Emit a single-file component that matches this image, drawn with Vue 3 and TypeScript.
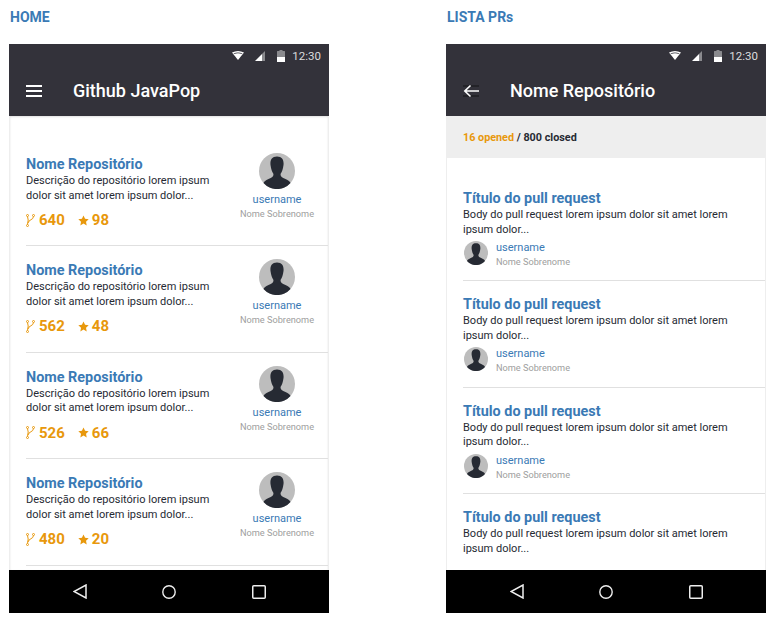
<script setup lang="ts">
interface Repo {
  forks: number
  stars: number
}

interface Pull {
  id: number
  showOwner: boolean
}

const repos: Repo[] = [
  { forks: 640, stars: 98 },
  { forks: 562, stars: 48 },
  { forks: 526, stars: 66 },
  { forks: 480, stars: 20 },
]

// the last row is cut by the nav bar before its owner starts
const pulls: Pull[] = [
  { id: 1, showOwner: true },
  { id: 2, showOwner: true },
  { id: 3, showOwner: true },
  { id: 4, showOwner: false },
]
</script>

<template>
  <div class="page">
    <section class="column">
      <h2 class="label">HOME</h2>
      <div class="phone">
        <header class="topbar">
          <div class="status">
            <svg class="st-wifi" width="12" height="9" viewBox="0 0 12 9"><path d="M0 1.500Q6-1.500 12 1.500L6 9Z" fill="#fff" /><path d="M1.500 2.500Q6 .5 10.500 2.500L10 3Q6 1.500 2 3Z" fill="#33323a" /></svg>
            <svg class="st-signal" width="11" height="11" viewBox="0 0 11 11"><path d="M0 11L7 4V11Z" fill="#fff" /><path d="M7 4L10 1V11H7Z" fill="#8a8a8e" /></svg>
            <svg class="st-battery" width="8" height="12" viewBox="0 0 8 12"><path d="M2.500 0H5.500V1H7.500A.5.5 0 0 1 8 1.500V11.500A.5.5 0 0 1 7.500 12H.5A.5.5 0 0 1 0 11.500V1.500A.5.5 0 0 1 .5 1H2.500Z" fill="#8a8a8e" /><rect y="7" width="8" height="5" fill="#fff" /></svg>
            <span class="clock">12:30</span>
          </div>
          <div class="appbar">
            <svg class="bar-icon" width="16" height="14" viewBox="0 0 16 14"><path d="M0 2H16M0 7H16M0 12H16" stroke="#fff" stroke-width="2" /></svg>
            <span class="bar-title">Github JavaPop</span>
          </div>
        </header>
        <div class="content list-home">
          <article v-for="repo in repos" :key="repo.forks" class="repo">
            <div class="repo-main">
              <h3 class="title">Nome Repositório</h3>
              <p class="text">Descrição do repositório lorem ipsum<br />dolor sit amet lorem ipsum dolor...</p>
              <div class="stats">
                <span class="stat fork">
                  <svg width="9" height="13" viewBox="0 0 9 13" fill="none" stroke="#e8980c" stroke-width="1"><circle cx="1.500" cy="1.500" r="1" /><circle cx="7.500" cy="1.500" r="1" /><circle cx="1.500" cy="11.500" r="1" /><path d="M1.500 2.500L2.200 6L1.500 10.500M7.500 2.500C7.500 6 2.500 5.500 2 9" /></svg>
                  {{ repo.forks }}
                </span>
                <span class="stat">
                  <svg width="11" height="11" viewBox="0 0 24 24" fill="#e8980c"><path d="M12 1l3.400 7.300 7.900 1-5.800 5.500 1.500 7.900L12 18.800l-6.900 3.900 1.500-7.900L.7 9.300l7.900-1z" /></svg>
                  {{ repo.stars }}
                </span>
              </div>
            </div>
            <div class="repo-owner">
              <svg class="avatar big" viewBox="0 0 36 36"><circle cx="18" cy="18" r="18" fill="#bdbdbd" /><path d="M18 3.500C12.500 3.500 11 7.500 11.500 12C12 16 13 19 14.500 21C14.500 23.500 13 24.500 9.500 26C6.500 27.300 5 28.500 4.500 30A18 18 0 0 0 31.500 30C31 28.500 29.500 27.300 26.500 26C23 24.500 21.500 23.500 21.500 21C23 19 24 16 24.500 12C25 7.500 23.500 3.500 18 3.500Z" fill="#262a33" /></svg>
              <span class="username">username</span>
              <span class="fullname">Nome Sobrenome</span>
            </div>
          </article>
        </div>
        <nav class="navbar">
          <svg width="14" height="15" viewBox="0 0 14 15"><path d="M13 1V14L1 7.500Z" fill="none" stroke="#eee" stroke-width="1.500" /></svg>
          <svg class="nav-home" width="14" height="14" viewBox="0 0 14 14"><circle cx="7" cy="7" r="6.200" fill="none" stroke="#eee" stroke-width="1.400" /></svg>
          <svg width="14" height="14" viewBox="0 0 14 14"><rect x=".75" y=".75" width="12.500" height="12.500" rx="1" fill="none" stroke="#eee" stroke-width="1.500" /></svg>
        </nav>
      </div>
    </section>

    <section class="column">
      <h2 class="label">LISTA PRs</h2>
      <div class="phone">
        <header class="topbar">
          <div class="status">
            <svg class="st-wifi" width="12" height="9" viewBox="0 0 12 9"><path d="M0 1.500Q6-1.500 12 1.500L6 9Z" fill="#fff" /><path d="M1.500 2.500Q6 .5 10.500 2.500L10 3Q6 1.500 2 3Z" fill="#33323a" /></svg>
            <svg class="st-signal" width="11" height="11" viewBox="0 0 11 11"><path d="M0 11L7 4V11Z" fill="#fff" /><path d="M7 4L10 1V11H7Z" fill="#8a8a8e" /></svg>
            <svg class="st-battery" width="8" height="12" viewBox="0 0 8 12"><path d="M2.500 0H5.500V1H7.500A.5.5 0 0 1 8 1.500V11.500A.5.5 0 0 1 7.500 12H.5A.5.5 0 0 1 0 11.500V1.500A.5.5 0 0 1 .5 1H2.500Z" fill="#8a8a8e" /><rect y="7" width="8" height="5" fill="#fff" /></svg>
            <span class="clock">12:30</span>
          </div>
          <div class="appbar">
            <svg class="bar-icon" width="16" height="14" viewBox="0 0 16 14"><path d="M0 2H16M0 12H16" stroke="#232328" stroke-width="2" /><path d="M16 7H2M7.500 1.500L1.800 7L7.500 12.500" fill="none" stroke="#fff" stroke-width="1.600" /></svg>
            <span class="bar-title">Nome Repositório</span>
          </div>
        </header>
        <div class="counter">
          <span class="opened">16 opened</span>&nbsp;/ 800 closed
        </div>
        <div class="content list-prs">
          <article v-for="pr in pulls" :key="pr.id" class="pull">
            <h3 class="title">Título do pull request</h3>
            <p class="text">Body do pull request lorem ipsum dolor sit amet lorem<br />ipsum dolor...</p>
            <div v-if="pr.showOwner" class="pull-owner">
              <svg class="avatar small" viewBox="0 0 36 36"><circle cx="18" cy="18" r="18" fill="#bdbdbd" /><path d="M18 3.500C12.500 3.500 11 7.500 11.500 12C12 16 13 19 14.500 21C14.500 23.500 13 24.500 9.500 26C6.500 27.300 5 28.500 4.500 30A18 18 0 0 0 31.500 30C31 28.500 29.500 27.300 26.500 26C23 24.500 21.500 23.500 21.500 21C23 19 24 16 24.500 12C25 7.500 23.500 3.500 18 3.500Z" fill="#262a33" /></svg>
              <div class="pull-names">
                <span class="username">username</span>
                <span class="fullname">Nome Sobrenome</span>
              </div>
            </div>
          </article>
        </div>
        <nav class="navbar">
          <svg width="14" height="15" viewBox="0 0 14 15"><path d="M13 1V14L1 7.500Z" fill="none" stroke="#eee" stroke-width="1.500" /></svg>
          <svg class="nav-home" width="14" height="14" viewBox="0 0 14 14"><circle cx="7" cy="7" r="6.200" fill="none" stroke="#eee" stroke-width="1.400" /></svg>
          <svg width="14" height="14" viewBox="0 0 14 14"><rect x=".75" y=".75" width="12.500" height="12.500" rx="1" fill="none" stroke="#eee" stroke-width="1.500" /></svg>
        </nav>
      </div>
    </section>
  </div>
</template>

<style scoped>
.page {
  display: flex;
  gap: 117px;
  width: 776px;
  height: 620px;
  padding: 0 10px 0 9px;
  box-sizing: border-box;
  background: #fff;
  font-family: Roboto, "Liberation Sans", sans-serif;
  overflow: hidden;
}

.column {
  width: 320px;
}

.label {
  height: 44px;
  margin: 0;
  padding: 9px 0 0 1px;
  box-sizing: border-box;
  font-size: 14px;
  line-height: 16px;
  font-weight: 700;
  color: #3a7ab5;
}

.phone {
  display: flex;
  flex-direction: column;
  height: 569px;
  overflow: hidden;
}

.topbar {
  flex: none;
  height: 72px;
  background: #33323a;
  color: #fff;
}

.status {
  display: flex;
  align-items: center;
  justify-content: flex-end;
  height: 23px;
  padding-right: 8px;
}

.st-wifi {
  margin-right: 11px;
}

.st-signal {
  margin-right: 11px;
}

.st-battery {
  margin-right: 7px;
}

.clock {
  font-size: 11.500px;
  color: #dcdcde;
}

.appbar {
  display: flex;
  align-items: center;
  height: 47px;
}

.bar-icon {
  width: 16px;
  margin-left: 17px;
}

.bar-title {
  margin-left: 31px;
  font-size: 18px;
  font-weight: 500;
}

.content {
  flex: 1;
  min-height: 0;
  overflow: hidden;
  border-left: 1px solid #eee;
  border-right: 1px solid #eee;
  box-sizing: border-box;
}

.list-home {
  padding: 24px 0 0 16px;
  box-shadow: inset 0 1px 2px rgba(0, 0, 0, 0.12);
}

.list-prs {
  padding: 17px 0 0 16px;
  background: #fff;
}

.counter {
  flex: none;
  height: 42px;
  padding-left: 17px;
  display: flex;
  align-items: center;
  background: #eee;
  font-size: 10.800px;
  font-weight: 700;
  color: #262a33;
}

.opened {
  color: #e8980c;
}

.repo {
  display: flex;
  height: 106.400px;
  padding-top: 17px;
  box-sizing: border-box;
  border-bottom: 1px solid #e0e0e0;
}

.repo-main {
  width: 206px;
}

.title {
  margin: 0;
  font-size: 14.400px;
  line-height: 16px;
  font-weight: 700;
  color: #3a7ab5;
}

.text {
  margin: 1px 0 0;
  font-size: 11px;
  line-height: 14.500px;
  color: #262a33;
  white-space: nowrap;
}

.stats {
  display: flex;
  align-items: center;
  gap: 13px;
  margin-top: 9px;
}

.stat {
  display: flex;
  align-items: center;
  gap: 3px;
  font-size: 15px;
  line-height: 16px;
  font-weight: 700;
  color: #e8980c;
}

.fork {
  gap: 4px;
}

.repo-owner {
  display: flex;
  flex-direction: column;
  align-items: center;
  width: 90px;
  margin-top: -4px;
}

.avatar {
  display: block;
  flex: none;
}

.big {
  width: 36px;
  height: 36px;
  margin-bottom: 4px;
}

.small {
  width: 24px;
  height: 24px;
}

.username {
  font-size: 11px;
  line-height: 13px;
  color: #3a7ab5;
}

.fullname {
  margin-top: 2px;
  font-size: 9.200px;
  line-height: 11px;
  color: #9e9e9e;
}

.pull {
  height: 106.400px;
  padding-top: 16px;
  box-sizing: border-box;
  border-bottom: 1px solid #e0e0e0;
}

.pull-owner {
  display: flex;
  align-items: flex-start;
  gap: 8px;
  margin-top: 4px;
  margin-left: 1px;
}

.pull-names {
  display: flex;
  flex-direction: column;
}

.navbar {
  flex: none;
  display: flex;
  align-items: center;
  justify-content: space-between;
  height: 43px;
  padding: 0 63px 0 64px;
  background: #000;
}

.nav-home {
  margin-right: 2px;
}
</style>

<style>
body {
  background: #fff;
}
</style>
